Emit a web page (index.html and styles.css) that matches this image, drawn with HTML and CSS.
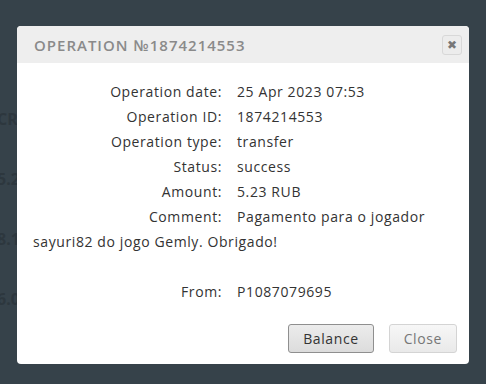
FILE: index.html
```html
<!DOCTYPE html>
<html lang="en">
<head>
    <meta charset="UTF-8">
    <meta name="viewport" content="width=device-width, initial-scale=1.0">
    <title>Operation 1874214553</title>
    <link rel="stylesheet" href="styles.css">
</head>
<body>
    <div class="page">
        <div class="page-row">CR</div>
        <div class="page-row">5.2</div>
        <div class="page-row">8.1</div>
        <div class="page-row">6.0</div>
    </div>

    <div class="modal">
        <div class="modal-header">
            <h3>Operation №1874214553</h3>
            <button class="modal-close" title="Close">&#x2716;</button>
        </div>
        <div class="modal-body">
            <div><span class="lbl">Operation date:</span>25 Apr 2023 07:53</div>
            <div><span class="lbl">Operation ID:</span>1874214553</div>
            <div><span class="lbl">Operation type:</span>transfer</div>
            <div><span class="lbl">Status:</span>success</div>
            <div><span class="lbl">Amount:</span>5.23 RUB</div>
            <div><span class="lbl">Comment:</span>Pagamento para o jogador sayuri82 do jogo Gemly. Obrigado!</div>
            <br>
            <div><span class="lbl">From:</span>P1087079695</div>
        </div>
        <div class="modal-footer">
            <button class="btn btn-primary">Balance</button>
            <button class="btn">Close</button>
        </div>
    </div>
</body>
</html>
```

FILE: styles.css
```css
body {
    background-color: #36424a;
    color: #333333;
    font-family: "Open Sans", Arial, sans-serif;
    margin: 0;
    height: 384px;
    overflow: hidden;
}
.page {
    padding-top: 108px;
    margin-left: -3px;
    font-weight: bold;
    font-size: 16px;
    color: #2d373e;
}
.page-row {
    height: 60px;
}
.modal {
    position: absolute;
    left: 17px;
    top: 26px;
    width: 452px;
    background-color: #ffffff;
    border-radius: 4px;
    overflow: hidden;
}
.modal-header {
    background-color: #eeeeee;
    height: 37px;
    display: flex;
    align-items: center;
    justify-content: space-between;
    padding: 0 7px 0 17px;
}
.modal-header h3 {
    margin: 0;
    font-size: 15px;
    font-weight: 600;
    letter-spacing: 1px;
    text-transform: uppercase;
    color: #8a8a8a;
}
.modal-close {
    width: 20px;
    height: 20px;
    padding: 0;
    border: 1px solid #d8d8d8;
    border-radius: 3px;
    background-color: #ececec;
    color: #777777;
    font-size: 12px;
    line-height: 18px;
    cursor: pointer;
}
.modal-body {
    padding: 16px 16px 20px 16px;
    font-size: 14px;
    line-height: 25px;
    letter-spacing: 0.6px;
}
.lbl {
    display: inline-block;
    width: 189px;
    margin-right: 15px;
    text-align: right;
}
.modal-footer {
    display: flex;
    justify-content: flex-end;
    gap: 15px;
    padding: 0 12px 11px 0;
}
.btn {
    height: 29px;
    padding: 0 14px;
    font-family: "Open Sans", Arial, sans-serif;
    font-size: 14px;
    letter-spacing: 0.6px;
    color: #777777;
    background: linear-gradient(#f7f7f7, #e9e9e9);
    border: 1px solid #d4d4d4;
    border-radius: 3px;
    cursor: pointer;
}
.btn-primary {
    color: #333333;
    background: linear-gradient(#ececec, #dcdcdc);
    border-color: #8f8f8f;
}
```
